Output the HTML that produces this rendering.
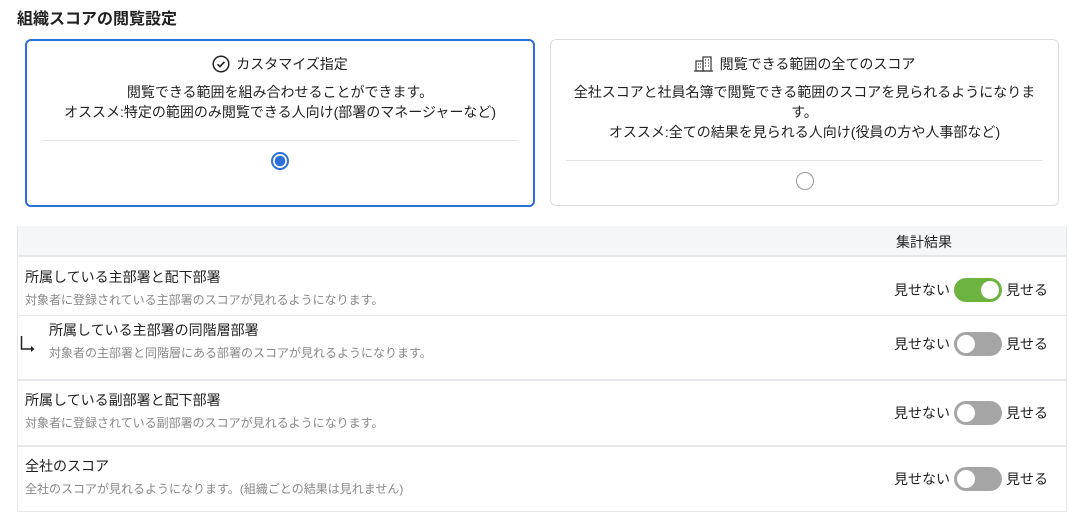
<!DOCTYPE html>
<html><head><meta charset="utf-8"><style>
*{box-sizing:border-box;margin:0;padding:0}
body{width:1076px;height:527px;background:#fff;font-family:"Noto Sans CJK JP",sans-serif;color:#222;position:relative;overflow:hidden}
.abs{position:absolute}
h1{position:absolute;left:17px;top:5px;font-size:16px;font-weight:bold;color:#222;line-height:24px}
.card{position:absolute;border-radius:6px;text-align:center;font-size:14px;line-height:20px}
.c1{left:25px;top:39px;width:510px;height:168px;border:2px solid #2a6fdb}
.c2{left:550px;top:39px;width:509px;height:167px;border:1px solid #ddd}
.ttl{display:flex;justify-content:center;align-items:center;gap:6px}
.hr{position:absolute;height:1px;background:#e5e5e5}
.radio{position:absolute;width:18px;height:18px;border-radius:50%}
.th{position:absolute;left:17px;top:226px;width:1050px;height:31px;background:#f5f6f8;border-bottom:2px solid #e6e7eb}
.row .t{position:absolute;font-size:14px;color:#222;line-height:20px}
.row .d{position:absolute;font-size:12px;color:#888;line-height:16px;white-space:nowrap}
.line{position:absolute;left:17px;width:1050px;background:#e6e7eb}
.tg{position:absolute;left:894px;font-size:14px;display:flex;align-items:center;height:24px}
.sw{width:48px;height:24px;border-radius:12px;background:#a5a5a5;position:relative;margin:0 4px}
.sw::after{content:"";position:absolute;left:3px;top:3px;width:18px;height:18px;border-radius:50%;background:#fff}
.sw.on{background:#6cb33f}.sw.on::after{left:27px}
.l{font-family:"Liberation Sans",sans-serif}
</style></head><body>
<h1>組織スコアの閲覧設定</h1>
<div class="card c1">
 <div class="ttl" style="margin-top:13px"><svg width="18" height="18" viewBox="0 0 18 18"><circle cx="9" cy="9" r="7.8" fill="none" stroke="#222" stroke-width="1.5"/><path d="M5.5 9.2l2.4 2.4 4.6-4.8" fill="none" stroke="#222" stroke-width="1.6"/></svg><span>カスタマイズ指定</span></div>
 <div style="margin-top:8px">閲覧できる範囲を組み合わせることができます。<br>オススメ<span class="l">:</span>特定の範囲のみ閲覧できる人向け<span class="l">(</span>部署のマネージャーなど<span class="l">)</span></div>
 <div class="hr" style="left:15px;right:15px;top:99px"></div>
 <div class="radio" style="left:244px;top:111px;border:2px solid #2a6fdb;background:radial-gradient(circle,#2a6fdb 5px,#fff 5.5px)"></div>
</div>
<div class="card c2">
 <div class="ttl" style="margin-top:14px"><svg width="20" height="16" viewBox="0 0 20 16"><rect x="2" y="5" width="7" height="10" fill="none" stroke="#444" stroke-width="1.3"/><rect x="9" y="1" width="8" height="14" fill="none" stroke="#444" stroke-width="1.3"/><path d="M4 8h1M4 11h1M6 8h1M6 11h1M11 4h1M14 4h1M11 7h1M14 7h1M11 10h1M14 10h1" stroke="#444" stroke-width="1.3"/><path d="M0 15h19" stroke="#444" stroke-width="1.3"/></svg><span>閲覧できる範囲の全てのスコア</span></div>
 <div style="margin-top:8px;padding:0 14px">全社スコアと社員名簿で閲覧できる範囲のスコアを見られるようになります。<br>オススメ<span class="l">:</span>全ての結果を見られる人向け<span class="l">(</span>役員の方や人事部など<span class="l">)</span></div>
 <div class="hr" style="left:15px;right:15px;top:120px"></div>
 <div class="radio" style="left:245px;top:132px;border:1px solid #999"></div>
</div>
<div class="th"></div>
<div class="abs" style="left:896px;top:232px;font-size:14px;line-height:20px">集計結果</div>
<div class="abs" style="left:17px;top:226px;width:1050px;height:286px;border-left:1px solid #e6e7eb;border-right:1px solid #e6e7eb"></div>
<div class="line" style="top:315px;height:1px"></div>
<div class="line" style="top:379px;height:2px"></div>
<div class="line" style="top:445px;height:2px"></div>
<div class="line" style="top:511px;height:1px"></div>
<div class="row">
 <div class="t" style="left:25px;top:267px">所属している主部署と配下部署</div>
 <div class="d" style="left:25px;top:292px">対象者に登録されている主部署のスコアが見れるようになります。</div>
 <div class="tg" style="top:278px">見せない<div class="sw on"></div>見せる</div>
 <svg class="abs" style="left:19px;top:335px" width="18" height="18" viewBox="0 0 18 18"><path d="M2.5 1v13h12" fill="none" stroke="#222" stroke-width="1.5"/><path d="M12 11l3.5 3-3.5 3z" fill="#222"/></svg>
 <div class="t" style="left:49px;top:320px">所属している主部署の同階層部署</div>
 <div class="d" style="left:49px;top:345px">対象者の主部署と同階層にある部署のスコアが見れるようになります。</div>
 <div class="tg" style="top:332px">見せない<div class="sw"></div>見せる</div>
 <div class="t" style="left:25px;top:390px">所属している副部署と配下部署</div>
 <div class="d" style="left:25px;top:415px">対象者に登録されている副部署のスコアが見れるようになります。</div>
 <div class="tg" style="top:401px">見せない<div class="sw"></div>見せる</div>
 <div class="t" style="left:25px;top:456px">全社のスコア</div>
 <div class="d" style="left:25px;top:481px">全社のスコアが見れるようになります。<span class="l">(</span>組織ごとの結果は見れません<span class="l">)</span></div>
 <div class="tg" style="top:467px">見せない<div class="sw"></div>見せる</div>
</div>
</body></html>
